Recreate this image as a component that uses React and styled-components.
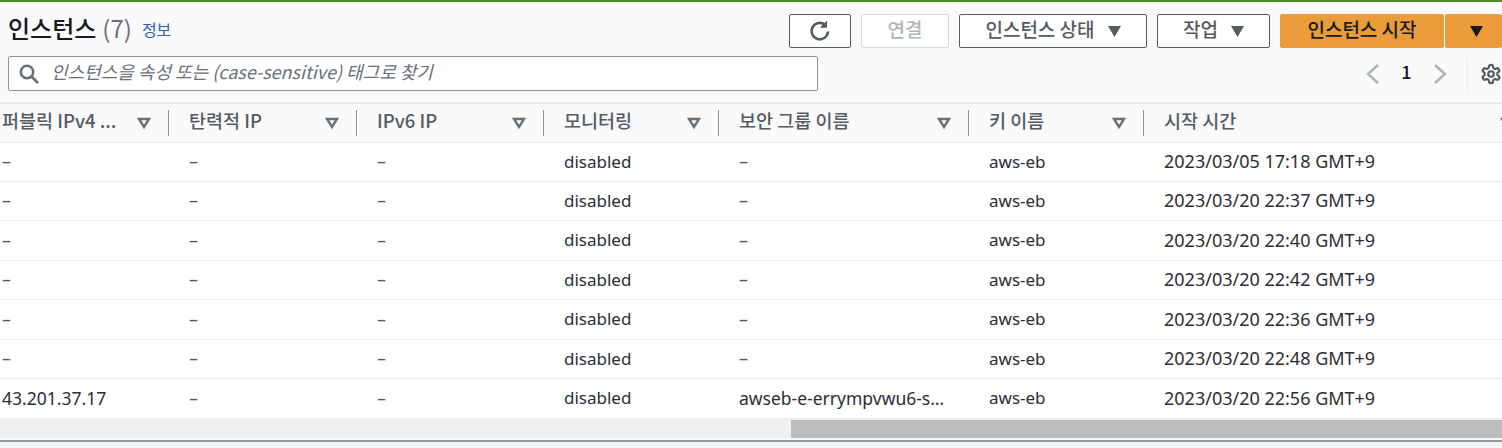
import React from 'react'
import styled, { createGlobalStyle } from 'styled-components'

const GlobalStyle = createGlobalStyle`
  html, body { margin: 0; padding: 0; height: 448px; overflow: hidden; background: #f2f3f3; }
  body { font-family: "Noto Sans CJK KR", "Noto Sans", sans-serif; color: #16191f; }
  * { box-sizing: border-box; }
`

const Page = styled.div`
  width: 1502px;
  height: 448px;
  overflow: hidden;
  display: flex;
  flex-direction: column;
`

const Panel = styled.section`
  height: 442px;
  flex: none;
  display: flex;
  flex-direction: column;
  background: #fafafa;
  border-top: 2px solid #4e8a2a;
  border-bottom: 2px solid #8d9aa0;
`

const Header = styled.header`
  height: 102px;
  flex: none;
  padding: 12px 0 0 8px;
  border-bottom: 2px solid #eaeded;
`

const TopRow = styled.div`
  display: flex;
  align-items: center;
  height: 34px;
  width: 1502px;
`

const Title = styled.h2`
  margin: 0 0 6px;
  font-size: 24px;
  font-weight: 500;
  line-height: 30px;
  white-space: nowrap;
  color: #16191f;
`

const Count = styled.span`
  margin-left: 6px;
  font-weight: 400;
  color: #687078;
`

const InfoLink = styled.a`
  margin: 0 0 4px 10px;
  font-size: 16px;
  color: #2a5db0;
`

const Actions = styled.div`
  margin-left: auto;
  display: flex;
  gap: 10px;
  transform: translateX(-8px);
`

const Button = styled.button`
  height: 34px;
  width: ${p => p.$w}px;
  display: flex;
  align-items: center;
  justify-content: center;
  gap: 13px;
  padding: 0 0 5px;
  font: 500 19px "Noto Sans CJK KR", "Noto Sans", sans-serif;
  color: ${p => (p.$disabled ? '#aab7b8' : '#545b64')};
  background: #fff;
  border: 1px solid ${p => (p.$disabled ? '#d5dbdb' : '#545b64')};
  border-radius: 2px;
`

const SplitGroup = styled.div`
  display: flex;
  gap: 1px;
`

const PrimaryButton = styled(Button)`
  background: #ea9c38;
  border-color: #ea9c38;
  color: #16191f;
`

const SplitCaretButton = styled(PrimaryButton)`
  padding-left: 6px;
`

const Caret = styled.svg`
  width: 13px;
  height: 11px;
  flex: none;
  margin-top: 5px;
  fill: ${p => p.$color || '#545b64'};
`

const IconButton = styled(Button)`
  padding: 0;
  & > svg {
    display: block;
  }
`

const SearchRow = styled.div`
  display: flex;
  align-items: center;
  height: 35px;
  margin-top: 8px;
  width: 1494px;
`

const SearchBox = styled.div`
  width: 810px;
  height: 35px;
  display: flex;
  align-items: center;
  gap: 12px;
  padding-left: 10px;
  background: #fff;
  border: 1px solid #879596;
  border-radius: 2px;
`

const SearchHint = styled.span`
  font-size: 18px;
  font-style: italic;
  color: #687078;
  white-space: nowrap;
  margin-top: -6px;
`

const Pager = styled.div`
  margin-left: auto;
  display: flex;
  align-items: center;
  height: 34px;
`

const PageNumber = styled.span`
  width: 53px;
  text-align: center;
  font-size: 18px;
  font-weight: 500;
  margin-top: -6px;
`

const PagerDivider = styled.span`
  width: 1px;
  height: 34px;
  margin: 0 12px 0 18px;
  background: #eaeded;
`

const Table = styled.div`
  flex: 1;
  overflow: hidden;
`

const Row = styled.div`
  display: grid;
  grid-template-columns: 168px 188px 187px 175px 250px 175px 359px;
  height: ${p => p.$h}px;
  align-items: center;
  border-bottom: 1px solid #eaeded;
  background: #fff;
`

const HeadRow = styled(Row)`
  background: #fafafa;
`

const HeadCell = styled.div`
  display: flex;
  align-items: center;
  height: 26px;
  padding-left: ${p => (p.$first ? 2 : 20)}px;
  padding-right: 17px;
  font-size: 18.5px;
  font-weight: 500;
  color: #545b64;
  white-space: nowrap;
  border-left: ${p => (p.$first ? 'none' : '1px solid #879596')};
`

const HeadLabel = styled.span`
  flex: 1;
  margin-top: -6px;
`

const LastHeadCell = styled(HeadCell)`
  padding-right: 0;
  & > svg {
    margin-right: -12px;
  }
`

const Cell = styled.div`
  padding-left: ${p => (p.$first ? 2 : 21)}px;
  padding-bottom: 2px;
  font-family: "Noto Sans", "Noto Sans CJK KR", sans-serif;
  font-size: ${p => p.$size}px;
  color: ${p => (p.$empty ? '#545b64' : '#2a2e33')};
  white-space: nowrap;
  overflow: hidden;
`

const ScrollTrack = styled.div`
  height: 19px;
  margin-bottom: 2px;
  flex: none;
  display: flex;
  align-items: flex-end;
  justify-content: flex-end;
  background: #f0f0f0;
`

const ScrollThumb = styled.div`
  width: 711px;
  height: 18px;
  background: #bdbdbd;
`

const Hollow = styled.svg`
  width: 14px;
  height: 12px;
  flex: none;
  fill: none;
  stroke: #687078;
  stroke-width: 2.4;
`

const SortIcon = () => (
  <Hollow viewBox="0 0 14 12">
    <path d="M2 2h10L7 10z" />
  </Hollow>
)

const DownCaret = ({ color }) => (
  <Caret viewBox="0 0 12 10" $color={color}>
    <path d="M0 0h12L6 10z" />
  </Caret>
)

const columns = ['퍼블릭 IPv4 ...', '탄력적 IP', 'IPv6 IP', '모니터링', '보안 그룹 이름', '키 이름', '시작 시간']

const rows = [
  ['–', '–', '–', 'disabled', '–', 'aws-eb', '2023/03/05 17:18 GMT+9'],
  ['–', '–', '–', 'disabled', '–', 'aws-eb', '2023/03/20 22:37 GMT+9'],
  ['–', '–', '–', 'disabled', '–', 'aws-eb', '2023/03/20 22:40 GMT+9'],
  ['–', '–', '–', 'disabled', '–', 'aws-eb', '2023/03/20 22:42 GMT+9'],
  ['–', '–', '–', 'disabled', '–', 'aws-eb', '2023/03/20 22:36 GMT+9'],
  ['–', '–', '–', 'disabled', '–', 'aws-eb', '2023/03/20 22:48 GMT+9'],
  ['43.201.37.17', '–', '–', 'disabled', 'awseb-e-errympvwu6-s…', 'aws-eb', '2023/03/20 22:56 GMT+9']
]

const rowHeights = [39, 39, 40, 39, 40, 39, 40]

const cellSize = value => {
  if (value === '–') return 18
  if (value.includes('/')) return 18
  if (value.length > 10) return 17.5
  return 17
}

export default function App() {
  return (
    <Page>
      <GlobalStyle />
      <Panel>
        <Header>
          <TopRow>
            <Title>인스턴스<Count>(7)</Count></Title>
            <InfoLink>정보</InfoLink>
            <Actions>
              <IconButton $w={62} aria-label="새로 고침">
                <svg width="24" height="24" viewBox="0 0 24 24" fill="none" stroke="#545b64" strokeWidth="2.6">
                  <path d="M17.5 6.2A8.2 8.2 0 1 0 20 12.5" />
                  <path d="M18.6 2.4v5.8h-5.8z" fill="#545b64" strokeWidth="1" />
                </svg>
              </IconButton>
              <Button $w={88} $disabled>연결</Button>
              <Button $w={188}>인스턴스 상태<DownCaret /></Button>
              <Button $w={113}>작업<DownCaret /></Button>
              <SplitGroup>
                <PrimaryButton $w={164}>인스턴스 시작</PrimaryButton>
                <SplitCaretButton $w={57}><DownCaret color="#16191f" /></SplitCaretButton>
              </SplitGroup>
            </Actions>
          </TopRow>
          <SearchRow>
            <SearchBox>
              <svg width="20" height="20" viewBox="0 0 20 20" fill="none" stroke="#687078" strokeWidth="2.6">
                <circle cx="8" cy="8" r="6.2" />
                <path d="M12.5 12.5l6.5 6.5" />
              </svg>
              <SearchHint>인스턴스을 속성 또는 (case-sensitive) 태그로 찾기</SearchHint>
            </SearchBox>
            <Pager>
              <svg width="16" height="24" viewBox="0 0 16 24" fill="none" stroke="#aab7b8" strokeWidth="2.4">
                <path d="M14 3L4 12l10 9" />
              </svg>
              <PageNumber>1</PageNumber>
              <svg width="16" height="24" viewBox="0 0 16 24" fill="none" stroke="#aab7b8" strokeWidth="2.4">
                <path d="M2 3l10 9-10 9" />
              </svg>
              <PagerDivider />
              <svg width="22" height="22" viewBox="0 0 24 24" fill="none" stroke="#545b64" strokeWidth="2.4" strokeLinejoin="round">
                <path d="M12.2 2h-.4a2 2 0 0 0-2 2v.2a2 2 0 0 1-1 1.7l-.4.3a2 2 0 0 1-2 0l-.2-.1a2 2 0 0 0-2.7.7l-.2.4a2 2 0 0 0 .7 2.7l.2.1a2 2 0 0 1 1 1.7v.6a2 2 0 0 1-1 1.7l-.2.1a2 2 0 0 0-.7 2.7l.2.4a2 2 0 0 0 2.7.7l.2-.1a2 2 0 0 1 2 0l.4.3a2 2 0 0 1 1 1.7v.2a2 2 0 0 0 2 2h.4a2 2 0 0 0 2-2v-.2a2 2 0 0 1 1-1.7l.4-.3a2 2 0 0 1 2 0l.2.1a2 2 0 0 0 2.7-.7l.2-.4a2 2 0 0 0-.7-2.7l-.2-.1a2 2 0 0 1-1-1.7v-.6a2 2 0 0 1 1-1.7l.2-.1a2 2 0 0 0 .7-2.7l-.2-.4a2 2 0 0 0-2.7-.7l-.2.1a2 2 0 0 1-2 0l-.4-.3a2 2 0 0 1-1-1.7V4a2 2 0 0 0-2-2z" />
                <circle cx="12" cy="12" r="3" />
              </svg>
            </Pager>
          </SearchRow>
        </Header>
        <Table>
          <HeadRow $h={39}>
            {columns.map((name, i) => {
              const Head = i === columns.length - 1 ? LastHeadCell : HeadCell
              return (
                <Head key={name} $first={i === 0}>
                  <HeadLabel>{name}</HeadLabel>
                  <SortIcon />
                </Head>
              )
            })}
          </HeadRow>
          {rows.map((row, r) => (
            <Row key={r} $h={rowHeights[r]}>
              {row.map((value, c) => (
                <Cell key={c} $first={c === 0} $empty={value === '–'} $size={cellSize(value)}>{value}</Cell>
              ))}
            </Row>
          ))}
        </Table>
        <ScrollTrack>
          <ScrollThumb />
        </ScrollTrack>
      </Panel>
    </Page>
  )
}
